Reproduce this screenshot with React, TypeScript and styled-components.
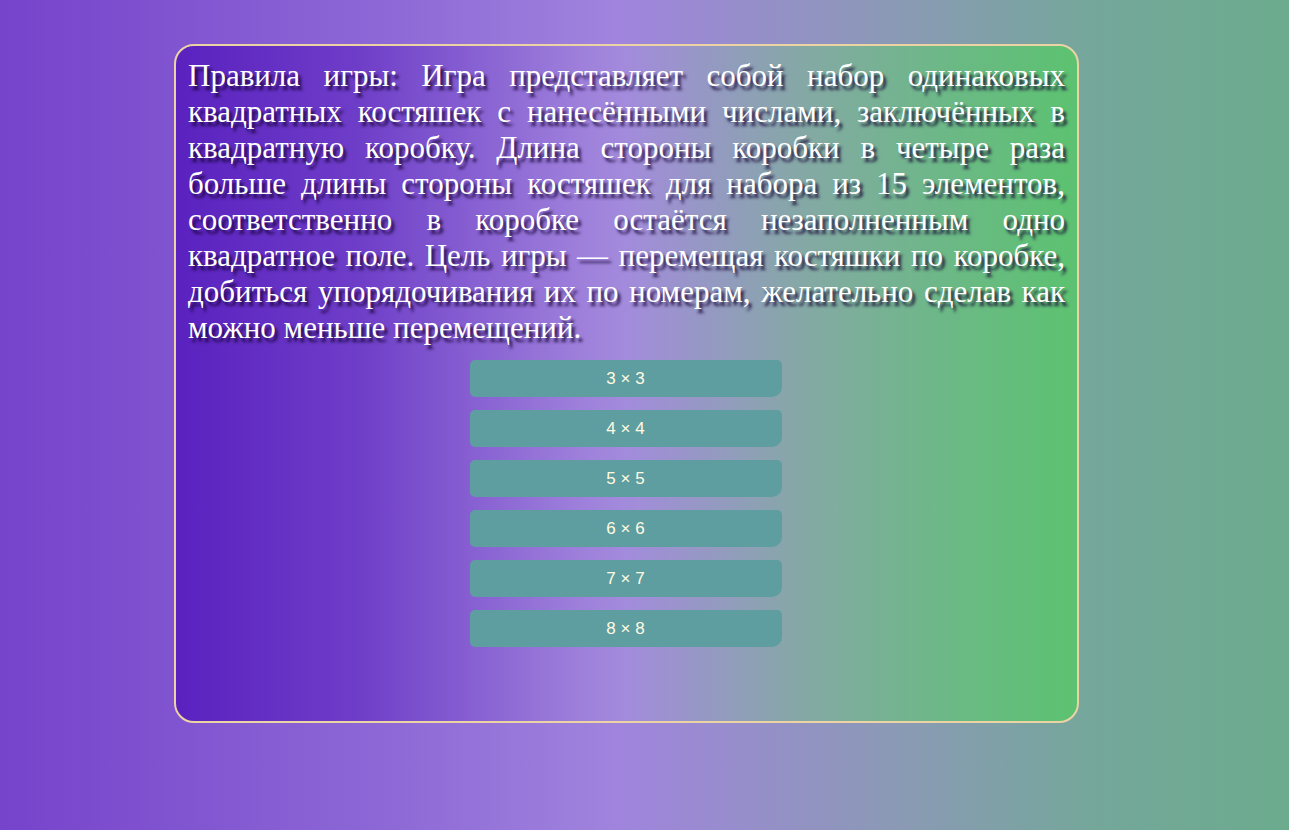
import React from "react";
import styled, { createGlobalStyle } from "styled-components";

const Global = createGlobalStyle`
  html, body { margin: 0; padding: 0; min-height: 100%; height: 100%; }
  body {
    background: linear-gradient(to right, #7643cb 0%, #8d68d6 30%, #a084dd 48%, #8a9ab4 70%, #74a79a 85%, #6cab8e 100%);
  }
  #root { min-height: 100%; }
`;

const Page = styled.div`
  min-height: 830px;
  padding: 44px 0 0 174px;
  box-sizing: border-box;
`;

const Card = styled.div`
  width: 905px;
  height: 679px;
  box-sizing: border-box;
  border: 2px solid #ecd3a4;
  border-radius: 20px;
  padding: 12px 12px;
  background: linear-gradient(to right, #5a21bf 0%, #6e3dc8 20%, #9e80db 45%, #a38bdc 50%, #84a9a4 70%, #6cb887 85%, #5cc270 100%);
  display: flex;
  flex-direction: column;
  align-items: center;
`;

const Rules = styled.p`
  margin: 0;
  font-family: "Liberation Serif", "Times New Roman", serif;
  font-size: 31px;
  line-height: 36px;
  text-align: justify;
  color: #ffffff;
  text-shadow: 3px 4px 3px rgba(20, 0, 50, 0.85);
  align-self: stretch;
`;

const Buttons = styled.div`
  display: flex;
  flex-direction: column;
  gap: 13px;
  margin-top: 14px;
  margin-right: 2px;
`;

const SizeButton = styled.button`
  width: 312px;
  height: 37px;
  border: none;
  border-radius: 5px 5px 10px 5px;
  background: #5f9ea0;
  color: #fffbe2;
  font-family: "Liberation Sans", Arial, sans-serif;
  font-size: 17px;
  cursor: pointer;
  padding: 0;
`;

const sizes = [3, 4, 5, 6, 7, 8];

export default function App() {
  return (
    <>
      <Global />
      <Page>
        <Card>
          <Rules>
            Правила игры: Игра представляет собой набор одинаковых квадратных костяшек с нанесёнными числами,
            заключённых в квадратную коробку. Длина стороны коробки в четыре раза больше длины стороны костяшек
            для набора из 15 элементов, соответственно в коробке остаётся незаполненным одно квадратное поле.
            Цель игры — перемещая костяшки по коробке, добиться упорядочивания их по номерам, желательно сделав
            как можно меньше перемещений.
          </Rules>
          <Buttons>
            {sizes.map((n) => (
              <SizeButton key={n}>
                {n} × {n}
              </SizeButton>
            ))}
          </Buttons>
        </Card>
      </Page>
    </>
  );
}
